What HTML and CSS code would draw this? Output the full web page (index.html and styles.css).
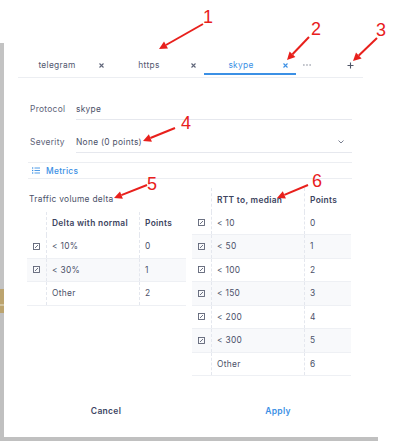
FILE: index.html
```html
<!DOCTYPE html>
<html lang="en">

<head>
    <meta charset="UTF-8">
    <meta name="viewport" content="width=device-width, initial-scale=1.0">
    <title>Protocol metrics</title>
    <link rel="stylesheet" href="styles.css">
</head>

<body>
    <div class="backdrop"></div>

    <div class="dialog">
        <div class="tabs">
            <div class="tab">
                <span class="tab-label">telegram</span>
                <svg class="tab-close" viewBox="0 0 5 5"><path d="M0.5 0.5L4.5 4.5M4.5 0.5L0.5 4.5" /></svg>
            </div>
            <div class="tab">
                <span class="tab-label">https</span>
                <svg class="tab-close" viewBox="0 0 5 5"><path d="M0.5 0.5L4.5 4.5M4.5 0.5L0.5 4.5" /></svg>
            </div>
            <div class="tab active">
                <span class="tab-label">skype</span>
                <svg class="tab-close" viewBox="0 0 5 5"><path d="M0.5 0.5L4.5 4.5M4.5 0.5L0.5 4.5" /></svg>
            </div>
            <div class="tab-more">
                <svg viewBox="0 0 9 2"><circle cx="1" cy="1" r="0.8" /><circle cx="4.5" cy="1" r="0.8" /><circle cx="8" cy="1" r="0.8" /></svg>
            </div>
            <div class="tab-add">
                <svg viewBox="0 0 7 7"><path d="M3.5 0.5V6.5M0.5 3.5H6.5" /></svg>
            </div>
        </div>

        <div class="form">
            <div class="field">
                <span class="field-label">Protocol</span>
                <span class="field-value">skype</span>
            </div>
            <div class="field">
                <span class="field-label">Severity</span>
                <span class="field-value">None (0 points)
                    <svg class="chevron" viewBox="0 0 6 4"><path d="M0.5 0.5L3 3L5.5 0.5" /></svg>
                </span>
            </div>

            <div class="section-head">
                <svg class="list-icon" viewBox="0 0 9 7">
                    <rect x="0" y="0" width="1.4" height="1.4" />
                    <rect x="0" y="2.8" width="1.4" height="1.4" />
                    <rect x="0" y="5.6" width="1.4" height="1.4" />
                    <rect x="2.8" y="0.2" width="6.2" height="1" />
                    <rect x="2.8" y="3" width="6.2" height="1" />
                    <rect x="2.8" y="5.8" width="6.2" height="1" />
                </svg>
                Metrics
            </div>

            <div class="metrics">
                <div class="metric">
                    <div class="metric-title">Traffic volume delta</div>
                    <div class="grid">
                        <div class="row head">
                            <div class="c-check"></div>
                            <div class="c-name">Delta with normal</div>
                            <div class="c-pts">Points</div>
                        </div>
                        <div class="row">
                            <div class="c-check"><svg class="box" viewBox="0 0 7 7"><rect x="0.5" y="0.5" width="6" height="6" /><path d="M2 5L5 2" /></svg></div>
                            <div class="c-name">&lt; 10%</div>
                            <div class="c-pts">0</div>
                        </div>
                        <div class="row">
                            <div class="c-check"><svg class="box" viewBox="0 0 7 7"><rect x="0.5" y="0.5" width="6" height="6" /><path d="M2 5L5 2" /></svg></div>
                            <div class="c-name">&lt; 30%</div>
                            <div class="c-pts">1</div>
                        </div>
                        <div class="row">
                            <div class="c-check"></div>
                            <div class="c-name">Other</div>
                            <div class="c-pts">2</div>
                        </div>
                    </div>
                </div>

                <div class="metric">
                    <div class="grid">
                        <div class="row head">
                            <div class="c-check"></div>
                            <div class="c-name">RTT to, median</div>
                            <div class="c-pts">Points</div>
                        </div>
                        <div class="row">
                            <div class="c-check"><svg class="box" viewBox="0 0 7 7"><rect x="0.5" y="0.5" width="6" height="6" /><path d="M2 5L5 2" /></svg></div>
                            <div class="c-name">&lt; 10</div>
                            <div class="c-pts">0</div>
                        </div>
                        <div class="row">
                            <div class="c-check"><svg class="box" viewBox="0 0 7 7"><rect x="0.5" y="0.5" width="6" height="6" /><path d="M2 5L5 2" /></svg></div>
                            <div class="c-name">&lt; 50</div>
                            <div class="c-pts">1</div>
                        </div>
                        <div class="row">
                            <div class="c-check"><svg class="box" viewBox="0 0 7 7"><rect x="0.5" y="0.5" width="6" height="6" /><path d="M2 5L5 2" /></svg></div>
                            <div class="c-name">&lt; 100</div>
                            <div class="c-pts">2</div>
                        </div>
                        <div class="row">
                            <div class="c-check"><svg class="box" viewBox="0 0 7 7"><rect x="0.5" y="0.5" width="6" height="6" /><path d="M2 5L5 2" /></svg></div>
                            <div class="c-name">&lt; 150</div>
                            <div class="c-pts">3</div>
                        </div>
                        <div class="row">
                            <div class="c-check"><svg class="box" viewBox="0 0 7 7"><rect x="0.5" y="0.5" width="6" height="6" /><path d="M2 5L5 2" /></svg></div>
                            <div class="c-name">&lt; 200</div>
                            <div class="c-pts">4</div>
                        </div>
                        <div class="row">
                            <div class="c-check"><svg class="box" viewBox="0 0 7 7"><rect x="0.5" y="0.5" width="6" height="6" /><path d="M2 5L5 2" /></svg></div>
                            <div class="c-name">&lt; 300</div>
                            <div class="c-pts">5</div>
                        </div>
                        <div class="row">
                            <div class="c-check"></div>
                            <div class="c-name">Other</div>
                            <div class="c-pts">6</div>
                        </div>
                    </div>
                </div>
            </div>
        </div>

        <div class="footer">
            <button class="btn">Cancel</button>
            <button class="btn primary">Apply</button>
        </div>
    </div>

    <!-- red callouts drawn over the screenshot -->
    <svg class="notes" viewBox="0 0 400 441">
        <g class="arrow">
            <line x1="203" y1="24" x2="166" y2="45" />
            <polygon points="159,49 164,41.6 168,48.5" />
            <line x1="309" y1="37" x2="292.5" y2="54.2" />
            <polygon points="287,60 289.6,51.5 295.4,57" />
            <line x1="377" y1="38" x2="358.8" y2="55.5" />
            <polygon points="353,61 356,52.6 361.6,58.4" />
            <line x1="175" y1="128" x2="150.4" y2="138" />
            <polygon points="143,141 148.9,134.3 151.9,141.7" />
            <line x1="147" y1="185" x2="121.4" y2="195.1" />
            <polygon points="114,198 120,191.4 122.9,198.8" />
            <line x1="308" y1="185" x2="284.4" y2="194.9" />
            <polygon points="277,198 282.8,191.2 285.9,198.6" />
        </g>
        <text x="203" y="23">1</text>
        <text x="311" y="35">2</text>
        <text x="376" y="36">3</text>
        <text x="181" y="129">4</text>
        <text x="147" y="190">5</text>
        <text x="312" y="187">6</text>
    </svg>
</body>

</html>
```

FILE: styles.css
```css
body {
    margin: 0;
    width: 400px;
    height: 441px;
    position: relative;
    overflow: hidden;
    background: #fff;
    font-family: Inter, "Open Sans", sans-serif;
    font-size: 8.4px;
    letter-spacing: 0.3px;
    color: #4b5169;
}

.backdrop {
    position: absolute;
    left: 0;
    top: 43px;
    width: 378px;
    height: 398px;
    background: linear-gradient(to bottom,
            #c3c3c3 0, #c3c3c3 246px,
            #bca46f 246px, #bca46f 261px,
            #d2c4a0 261px, #d2c4a0 263px,
            #bca46f 263px, #bca46f 270px,
            #c0c0c0 270px);
}

.dialog {
    position: absolute;
    left: 4px;
    top: 0;
    width: 374px;
    height: 437px;
    background: #fff;
    display: flex;
    flex-direction: column;
    padding-top: 53px;
    box-sizing: border-box;
}

/* tabs */

.tabs {
    display: flex;
    align-items: center;
    height: 25px;
    margin: 0 15px 0 14px;
    padding-left: 2px;
    border-bottom: 1px solid #eceef2;
    box-sizing: border-box;
}

.tab {
    position: relative;
    width: 92px;
    height: 24px;
    display: flex;
    align-items: center;
    color: #525870;
}

.tab-label {
    width: 74px;
    text-align: center;
}

.tab-close {
    width: 5px;
    height: 5px;
    margin-left: 5px;
    fill: none;
    stroke: #5f6579;
    stroke-width: 1.1;
}

.tab.active {
    color: #3b90e5;
}

.tab.active .tab-close {
    stroke: #3b90e5;
}

.tab.active::after {
    content: "";
    position: absolute;
    left: 0;
    right: 0;
    bottom: 2px;
    height: 2px;
    background: #3b90e5;
}

.tab-more {
    width: 22px;
    display: flex;
    justify-content: center;
}

.tab-more svg {
    width: 8px;
    height: 2px;
    fill: #7a7f8f;
}

.tab-add {
    margin-left: auto;
    margin-right: 6px;
    width: 14px;
    display: flex;
    justify-content: center;
}

.tab-add svg {
    width: 7px;
    height: 7px;
    fill: none;
    stroke: #4f5567;
    stroke-width: 1.1;
}

/* form */

.form {
    margin-left: 24px;
    width: 324px;
}

.field {
    display: flex;
    margin-top: 21px;
}

.field + .field {
    margin-top: 12px;
}

.field-label {
    width: 46px;
    padding-left: 2px;
    line-height: 20px;
    color: #5c6277;
}

.field-value {
    flex: 1;
    height: 20px;
    display: flex;
    align-items: center;
    justify-content: space-between;
    border-bottom: 1px solid #e6e8ee;
    color: #4b5169;
}

.chevron {
    width: 6px;
    height: 4px;
    margin-right: 8px;
    fill: none;
    stroke: #6a7083;
    stroke-width: 0.9;
}

.section-head {
    margin-top: 9px;
    height: 17px;
    display: flex;
    align-items: center;
    gap: 6px;
    padding-left: 4px;
    border-top: 1px solid #eceef2;
    border-bottom: 1px solid #eceef2;
    box-sizing: border-box;
    color: #3b90e5;
    font-weight: 500;
}

.list-icon {
    width: 8px;
    height: 7px;
    fill: #3b90e5;
}

/* metric tables */

.metrics {
    display: flex;
    gap: 6px;
    margin: 9px 0 0 -1px;
}

.metric {
    width: 159px;
}

.metric-title {
    height: 23.5px;
    line-height: 23.5px;
    padding-left: 2px;
    color: #4b5169;
}

.row {
    display: flex;
    height: 23.5px;
    border-bottom: 1px solid #eef0f4;
    box-sizing: border-box;
}

.row.head {
    border-bottom: none;
    font-weight: 600;
    color: #3d4460;
}

.row:nth-child(odd):not(.head) {
    background: #f8f9fb;
}

.c-check,
.c-name,
.c-pts {
    display: flex;
    align-items: center;
}

.c-check {
    width: 19px;
    justify-content: center;
}

.c-name {
    width: 93px;
    padding-left: 5px;
    border-left: 1px dashed #e4e7ee;
    box-sizing: border-box;
}

.c-pts {
    width: 47px;
    padding-left: 5px;
    border-left: 1px dashed #e4e7ee;
    box-sizing: border-box;
}

.box {
    width: 7px;
    height: 7px;
    fill: none;
    stroke: #5d6376;
    stroke-width: 0.9;
}

/* footer */

.footer {
    display: flex;
    margin: auto 14px 11px 16px;
}

.btn {
    flex: 1;
    height: 30px;
    border: none;
    background: none;
    font-family: inherit;
    font-size: 8.5px;
    font-weight: 600;
    letter-spacing: 0.3px;
    color: #3d4563;
    cursor: pointer;
}

.btn.primary {
    color: #3b90e5;
}

/* callouts */

.notes {
    position: absolute;
    left: 0;
    top: 0;
    width: 400px;
    height: 441px;
    pointer-events: none;
}

.notes .arrow line {
    stroke: #e8201c;
    stroke-width: 2;
}

.notes .arrow polygon {
    fill: #e8201c;
}

.notes text {
    font-family: "Liberation Sans", Arial, sans-serif;
    font-size: 18px;
    letter-spacing: 0;
    fill: #e8201c;
}
```
